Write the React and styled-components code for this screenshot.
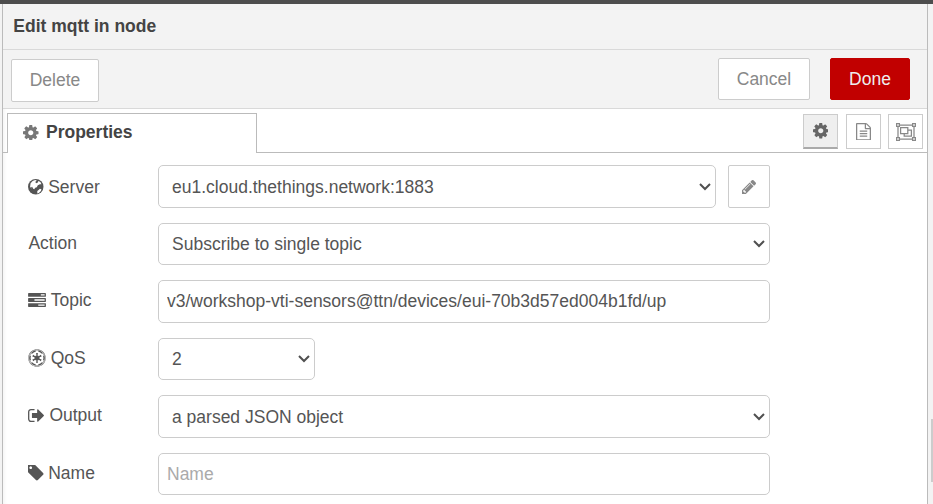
import React from 'react';
import styled, { createGlobalStyle, css } from 'styled-components';
import { FaEmpire } from 'react-icons/fa';

const GlobalStyle = createGlobalStyle`
  *, *::before, *::after { box-sizing: border-box; }
  body {
    margin: 0;
    overflow: hidden;
    background: #f3f3f3;
    color: #555;
    font: 17.5px/25px "Liberation Sans", Arial, sans-serif;
  }
`;

const Page = styled.div`
  display: flex;
  flex-direction: column;
  height: 504px;
`;

const TopStrip = styled.div`
  flex: none;
  height: 4px;
  background: #4d4d4d;
`;

const Workspace = styled.div`
  flex: 1;
  min-height: 0;
  display: flex;
`;

const Tray = styled.section`
  width: 926px;
  margin-left: 2px;
  border: 1px solid #bbb;
  border-width: 0 1px;
  background: #fff;
  box-shadow: inset 4px 0 4px -3px rgba(0, 0, 0, 0.06);
`;

const TrayHeader = styled.h1`
  height: 46px;
  margin: 0;
  padding: 9.5px 10.3px;
  border-bottom: 1px solid #d9d9d9;
  background: #f3f3f3;
  color: #444;
  font-size: 17.5px;
  line-height: 25px;
  font-weight: bold;
`;

const TrayToolbar = styled.div`
  display: flex;
  align-items: flex-start;
  height: 59px;
  padding: 8px 17px 0 8px;
  border-bottom: 1px solid #d9d9d9;
  background: #f3f3f3;
`;

const Button = styled.button`
  width: ${(p) => p.$width}px;
  height: ${(p) => (p.$lowered ? 43 : 42)}px;
  margin: ${(p) => (p.$lowered ? '1px auto 0 0' : '0 0 0 20px')};
  padding: 0;
  border: 1px solid ${(p) => (p.$primary ? '#c10000' : '#ccc')};
  border-radius: 2px;
  background: ${(p) => (p.$primary ? '#c10000' : '#fff')};
  color: ${(p) => (p.$primary ? '#eee' : '#888')};
  font: inherit;
`;

const TabBar = styled.div`
  display: flex;
  height: 44px;
  padding: 4px 4px 0;
  box-shadow: inset 0 -1px #bbb;
`;

const Tab = styled.div`
  display: flex;
  align-items: center;
  width: 250px;
  height: 40px;
  margin-right: auto;
  padding: 0 0 2px 15px;
  border: 1px solid #bbb;
  border-bottom: 0;
  background: #fff;
  color: #444;
  font-weight: bold;
  svg { margin-right: 7.5px; color: #777; }
`;

const ViewButton = styled.button`
  display: grid;
  place-items: center;
  width: 35px;
  height: 35px;
  margin: 1px 0 0 ${(p) => p.$gap}px;
  padding: 0;
  border: 1px solid #ccc;
  background: #fff;
  color: #888;
  ${(p) => p.$selected && css`
    border-bottom: 2px solid #aaa;
    background: #efefef;
    color: #666;
  `}
`;

const Form = styled.form`
  display: grid;
  gap: 15px;
  padding: 12px 0 0 25px;
`;

const Row = styled.div`
  display: flex;
  height: 42.5px;
`;

const Label = styled.label`
  display: flex;
  align-items: center;
  gap: ${(p) => p.$gap || 4.3}px;
  width: 130px;
  height: ${(p) => p.$height || 42}px;
  padding-left: 0.4px;
`;

const controlStyle = css`
  width: ${(p) => p.$width}px;
  height: 42.5px;
  margin: 0;
  border: 1px solid #ccc;
  border-radius: 5px;
  background: #fff;
  color: #555;
  font: inherit;
  outline: none;
`;

const TextInput = styled.input`
  ${controlStyle}
  padding: ${(p) => p.$drop || 0}px 8px 0;
  &::placeholder { color: #aaa; opacity: 1; }
`;

const SelectFrame = styled.div`
  display: grid;
  align-items: center;
  & > * { grid-area: 1 / 1; }
  & > svg { justify-self: end; margin: 1px 4px 0 0; pointer-events: none; }
`;

const SelectInput = styled.select`
  ${controlStyle}
  appearance: none;
  padding: 2px 30px 0 13px;
`;

const EditButton = styled.button`
  display: grid;
  place-items: center;
  width: 42px;
  height: 42.5px;
  margin-left: 12px;
  padding: 2px 0 0;
  border: 1px solid #ccc;
  border-radius: 2px;
  background: #fff;
  color: #888;
`;

const Gutter = styled.div`
  flex: 1;
  display: flex;
  justify-content: flex-end;
  padding-top: 415px;
`;

const ScrollThumb = styled.div`
  width: 2px;
  height: 63px;
  background: #ccc;
`;

const Svg = styled.svg`
  display: block;
  flex: none;
  fill: currentColor;
`;

const glyphs = {
  cog: 'M1024 640q0-106-75-181t-181-75-181 75-75 181 75 181 181 75 181-75 75-181zm512-109v222q0 12-8 23t-20 13l-185 28q-19 54-39 91 35 50 107 138 10 12 10 25t-9 23q-27 37-99 108t-94 71q-12 0-26-9l-138-108q-44 23-91 38-16 136-29 186-7 28-36 28h-222q-14 0-24.5-8.5t-11.5-21.5l-28-184q-49-16-90-37l-141 107q-10 9-25 9-14 0-25-11-126-114-165-168-7-10-7-23 0-12 8-23 15-21 51-66.5t54-70.5q-27-50-41-99l-183-27q-13-2-21-12.5t-8-23.5v-222q0-12 8-23t19-13l186-28q14-46 39-92-40-57-107-138-10-12-10-24 0-10 9-23 26-36 98.5-107.5t94.5-71.5q13 0 26 10l138 107q44-23 91-38 16-136 29-186 7-28 36-28h222q14 0 24.5 8.5t11.5 21.5l28 184q49 16 90 37l142-107q9-9 24-9 13 0 25 10 129 119 165 170 7 8 7 22 0 12-8 23-15 21-51 66.5t-54 70.5q26 50 41 98l183 28q13 2 21 12.5t8 23.5z',
  tasks: 'M1024 1408h640v-128h-640v128zm-384-512h1024v-128h-1024v128zm640-512h384v-128h-384v128zm512 832v256q0 26-19 45t-45 19h-1664q-26 0-45-19t-19-45v-256q0-26 19-45t45-19h1664q26 0 45 19t19 45zm0-512v256q0 26-19 45t-45 19h-1664q-26 0-45-19t-19-45v-256q0-26 19-45t45-19h1664q26 0 45 19t19 45zm0-512v256q0 26-19 45t-45 19h-1664q-26 0-45-19t-19-45v-256q0-26 19-45t45-19h1664q26 0 45 19t19 45z',
  signOut: 'M704 1440q0 4 1 20t.5 26.5-3 23.5-10 19.5-20.5 6.5h-320q-119 0-203.5-84.5t-84.5-203.5v-704q0-119 84.5-203.5t203.5-84.5h320q13 0 22.5 9.5t9.5 22.5q0 4 1 20t.5 26.5-3 23.5-10 19.5-20.5 6.5h-320q-66 0-113 47t-47 113v704q0 66 47 113t113 47h312l11.5 1 11.5 3 8 5.5 7 9 2 13.5zm928-544q0 26-19 45l-544 544q-19 19-45 19t-45-19-19-45v-288h-448q-26 0-45-19t-19-45v-384q0-26 19-45t45-19h448v-288q0-26 19-45t45-19 45 19l544 544q19 19 19 45z',
  tag: 'M576 448q0-53-37.5-90.5t-90.5-37.5-90.5 37.5-37.5 90.5 37.5 90.5 90.5 37.5 90.5-37.5 37.5-90.5zm1067 576q0 53-37 90l-491 492q-39 37-91 37-53 0-90-37l-715-716q-38-37-64.5-101t-26.5-117v-416q0-52 38-90t90-38h416q53 0 117 26.5t102 64.5l715 714q37 39 37 91z',
  pencil: 'M491 1536l91-91-235-235-91 91v107h128v128h107zm523-928q0-22-22-22-10 0-17 7l-542 542q-7 7-7 17 0 22 22 22 10 0 17-7l542-542q7-7 7-17zm-54-192l416 416-832 832h-416v-416zm683 96q0 53-37 90l-166 166-416-416 166-165q36-38 90-38 53 0 91 38l235 234q37 39 37 91z',
  fileText: 'M1596 380q28 28 48 76t20 88v1152q0 40-28 68t-68 28h-1344q-40 0-68-28t-28-68v-1600q0-40 28-68t68-28h896q40 0 88 20t76 48zm-444-244v376h376q-10-29-22-41l-313-313q-12-12-41-22zm384 1528v-1024h-416q-40 0-68-28t-28-68v-416h-768v1536h1280zm-1024-864q0-14 9-23t23-9h704q14 0 23 9t9 23v64q0 14-9 23t-23 9h-704q-14 0-23-9t-9-23v-64zm736 224q14 0 23 9t9 23v64q0 14-9 23t-23 9h-704q-14 0-23-9t-9-23v-64q0-14 9-23t23-9h704zm0 256q14 0 23 9t9 23v64q0 14-9 23t-23 9h-704q-14 0-23-9t-9-23v-64q0-14 9-23t23-9h704z',
};

function Glyph({ name, box, width, height }) {
  return (
    <Svg viewBox={box} width={width} height={height} aria-hidden="true">
      <path fillRule="evenodd" d={glyphs[name]} />
    </Svg>
  );
}

const Cog = () => <Glyph name="cog" box="0 -128 1536 1536" width={15.5} height={15.5} />;

const Globe = () => (
  <Svg viewBox="0 0 30 30" width="15.5" height="15.5" aria-hidden="true">
    <circle cx="15" cy="15" r="15" />
    <path fill="#fff" d="M5 8 9 4l5-2 3 1-3 3 2 2 3-1 1-3 4 2 2 4-3 0-4 2-2 4-3 1-2 3-2-1-2-4-2 1 1 3-3-4zM18 23l3-2 2-2 3 1-1 3-4 4-3 1z" />
  </Svg>
);

const ObjectGroup = () => (
  <Svg viewBox="0 0 20 18" width="20" height="18" aria-hidden="true">
    <g fill="none" stroke="currentColor" strokeWidth="1.25">
      <path d="M3.5 2h13M3.5 16h13M2 3.5v11M18 3.5v11" />
      <path d="M.6.6h2.8v2.8H.6zM16.6.6h2.8v2.8h-2.8zM.6 14.6h2.8v2.8H.6zM16.6 14.6h2.8v2.8h-2.8z" />
      <path d="M4.6 4.6h7.2v6H4.6zM11.8 7.2h3.6v6H8.2v-2.6" />
    </g>
  </Svg>
);

const Chevron = () => (
  <Svg viewBox="0 0 14 10" width="14" height="10" aria-hidden="true">
    <path d="M2 2l5 5 5-5" fill="none" stroke="#505050" strokeWidth="2" />
  </Svg>
);

const Select = ({ id, width, value }) => (
  <SelectFrame>
    <SelectInput id={id} $width={width} defaultValue={value}>
      <option>{value}</option>
    </SelectInput>
    <Chevron />
  </SelectFrame>
);

export default function App() {
  return (
    <Page>
      <GlobalStyle />
      <TopStrip />
      <Workspace>
        <Tray>
          <TrayHeader>Edit mqtt in node</TrayHeader>
          <TrayToolbar>
            <Button $width={88} $lowered>Delete</Button>
            <Button $width={92}>Cancel</Button>
            <Button $width={80} $primary>Done</Button>
          </TrayToolbar>
          <TabBar>
            <Tab><Cog />Properties</Tab>
            <ViewButton $gap={0} $selected aria-label="Properties"><Cog /></ViewButton>
            <ViewButton $gap={8} aria-label="Description">
              <Glyph name="fileText" box="128 0 1536 1792" width={15} height={17.5} />
            </ViewButton>
            <ViewButton $gap={7} aria-label="Appearance"><ObjectGroup /></ViewButton>
          </TabBar>
          <Form>
            <Row>
              <Label htmlFor="server" $height={44}><Globe />Server</Label>
              <Select id="server" width={558} value="eu1.cloud.thethings.network:1883" />
              <EditButton type="button" aria-label="Edit server">
                <Glyph name="pencil" box="128 149 1515 1515" width={14} height={14} />
              </EditButton>
            </Row>
            <Row>
              <Label htmlFor="action" $height={41}>Action</Label>
              <Select id="action" width={612} value="Subscribe to single topic" />
            </Row>
            <Row>
              <Label htmlFor="topic" $height={40}>
                <Glyph name="tasks" box="0 128 1792 1408" width={18} height={14} />Topic
              </Label>
              <TextInput id="topic" $width={612} defaultValue="v3/workshop-vti-sensors@ttn/devices/eui-70b3d57ed004b1fd/up" />
            </Row>
            <Row>
              <Label htmlFor="qos" $height={41}><FaEmpire size={18} />QoS</Label>
              <Select id="qos" width={157} value="2" />
            </Row>
            <Row>
              <Label htmlFor="output" $height={40} $gap={5}>
                <Glyph name="signOut" box="64 256 1568 1280" width={16} height={13} />Output
              </Label>
              <Select id="output" width={612} value="a parsed JSON object" />
            </Row>
            <Row>
              <Label htmlFor="name" $height={41}>
                <Glyph name="tag" box="192 192 1451 1451" width={15.5} height={15.5} />Name
              </Label>
              <TextInput id="name" $width={612} $drop={1} placeholder="Name" />
            </Row>
          </Form>
        </Tray>
        <Gutter><ScrollThumb /></Gutter>
      </Workspace>
    </Page>
  );
}
